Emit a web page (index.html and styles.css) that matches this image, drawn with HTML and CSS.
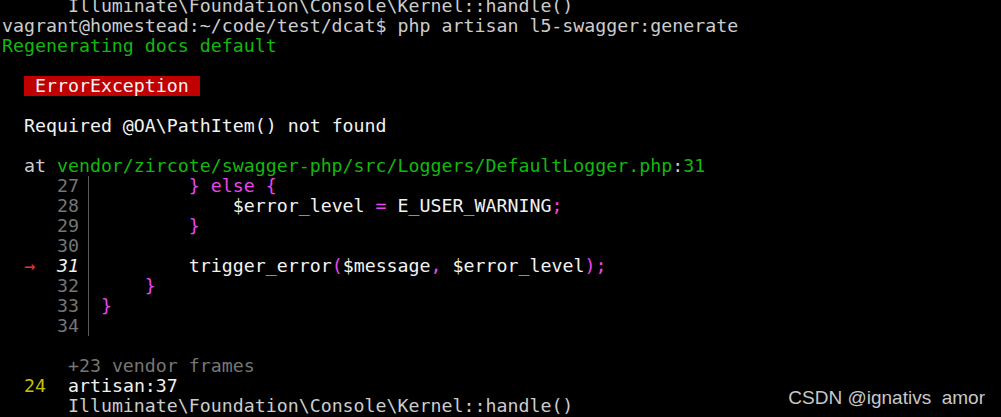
FILE: index.html
```html
<!DOCTYPE html>
<html>
  <head>
    <meta charset="utf-8">
    <title>php artisan l5-swagger:generate</title>
    <link rel="stylesheet" href="styles.css">
  </head>
  <body>
    <pre class="term"><span class="dim">      Illuminate\Foundation\Console\Kernel::handle()</span>
vagrant@homestead:~/code/test/dcat$ php artisan l5-swagger:generate
<span class="green">Regenerating docs default</span>

  <span class="badge"> ErrorException </span>

  <span class="bright">Required @OA\PathItem() not found</span>

  at <span class="green">vendor/zircote/swagger-php/src/Loggers/DefaultLogger.php</span>:<span class="green">31</span>
<span class="gray">     27</span><span class="bar"> </span>         <span class="pink">} else {</span>
<span class="gray">     28</span><span class="bar"> </span>             <span class="bright">$error_level <span class="pink">=</span> E_USER_WARNING<span class="pink">;</span></span>
<span class="gray">     29</span><span class="bar"> </span>         <span class="pink">}</span>
<span class="gray">     30</span><span class="bar"> </span>
  <span class="arrow">→</span>  <span class="cur">31</span><span class="bar"> </span>         <span class="bright">trigger_error<span class="pink">(</span>$message<span class="pink">,</span> $error_level<span class="pink">);</span></span>
<span class="gray">     32</span><span class="bar"> </span>     <span class="pink">}</span>
<span class="gray">     33</span><span class="bar"> </span> <span class="pink">}</span>
<span class="gray">     34</span><span class="bar"> </span>

      <span class="gray">+23 vendor frames</span>
  <span class="yellow">24</span>  <span class="bright">artisan:37</span>
      <span class="dim">Illuminate\Foundation\Console\Kernel::handle()</span></pre>
    <div class="mark">CSDN @ignativs&nbsp; amor</div>
  </body>
</html>
```
FILE: styles.css
```css
html {
  background: #000000;
}

body {
  margin: 0;
  height: 417px;
  overflow: hidden;
  position: relative;
}

.term {
  color: #cccccc;
  font: 18.25px/20px "DejaVu Sans Mono", "Liberation Mono", monospace;
  margin: -4px 0 0 2px;
}

.dim {
  color: #cccccc;
}

.bright {
  color: #f2f2f2;
}

.green {
  color: #13b80e;
}

.gray {
  color: #767676;
}

.yellow {
  color: #c1c100;
}

.pink {
  color: #ee44ee;
}

.arrow {
  color: #f03030;
}

.cur {
  color: #f2f2f2;
  font-style: italic;
}

.badge {
  background: #c00000;
  color: #f2f2f2;
  display: inline-block;
  height: 20px;
}

.bar {
  display: inline-block;
  width: 1ch;
  height: 20px;
  vertical-align: top;
  box-sizing: border-box;
  border-right: 1px solid #5a5a5a;
  transform: translateX(-1px);
}

.mark {
  color: #c8c8c8;
  font: 19px "Liberation Sans", Arial, sans-serif;
  position: absolute;
  right: 16px;
  bottom: 8px;
}
```
